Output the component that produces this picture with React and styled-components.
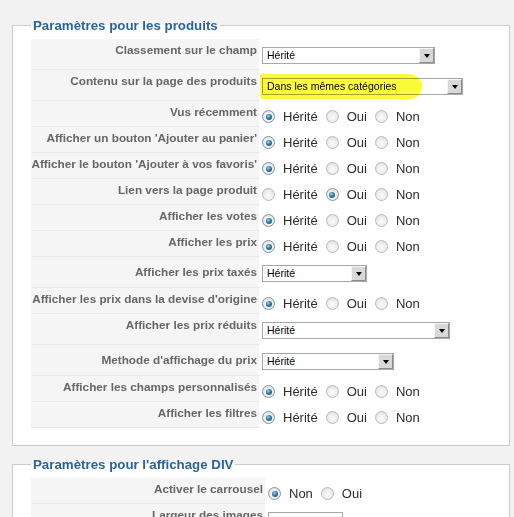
import React from 'react';
import styled, { createGlobalStyle } from 'styled-components';

const GlobalStyle = createGlobalStyle`
  html, body {
    margin: 0;
    padding: 0;
    background: #f2f2f2;
  }
  body {
    font-family: "Liberation Sans", Arial, sans-serif;
    overflow: hidden;
  }
`;

const Page = styled.div`
  padding: 18px 4px 0 12px;
`;

const Fieldset = styled.fieldset`
  margin: 0 0 11px;
  padding: 6px 18px 17px;
  border: 1px solid #cccccc;
  background: #ffffff;
  min-width: 0;
`;

const Legend = styled.legend`
  padding: 0 2px;
  font-size: 13.3px;
  line-height: 15px;
  font-weight: bold;
  color: #2a6496;
`;

const Table = styled.div`
  display: grid;
  grid-template-columns: ${p => p.$keyWidth}px 1fr;
`;

const Key = styled.div`
  display: flex;
  justify-content: flex-end;
  align-items: ${p => (p.$middle ? 'center' : 'flex-start')};
  padding: ${p => (p.$middle ? '0 2px 0 0' : '4px 2px 0 0')};
  background: #f5f5f5;
  border-bottom: 1px solid #e9e9e9;
  font-size: 11.75px;
  line-height: 14px;
  font-weight: bold;
  color: #666666;
  white-space: nowrap;
`;

const Value = styled.div`
  display: flex;
  align-items: center;
  padding: ${p => (p.$kind === 'radio' ? '8px 3px 3px' : '8px 3px 6px')};
  font-size: 13px;
  line-height: 15px;
  color: #2b2b2b;
`;

const Choice = styled.label`
  display: inline-flex;
  align-items: center;
  gap: 8px;
  margin-right: 8px;
  white-space: nowrap;
`;

const Radio = styled.span`
  position: relative;
  width: 13px;
  height: 13px;
  box-sizing: border-box;
  border-radius: 50%;
  border: 1px solid ${p => (p.$checked ? '#7b95aa' : '#b9b9b9')};
  background: radial-gradient(circle at 50% 60%, #fbfbfb 0, #ececec 55%, #d6d6d6 100%);
  flex-shrink: 0;

  &::after {
    content: '';
    display: ${p => (p.$checked ? 'block' : 'none')};
    position: absolute;
    inset: 2.5px;
    border-radius: 50%;
    background: radial-gradient(circle at 40% 35%, #9fd2ee 0, #2f7aa6 45%, #163f5f 100%);
  }
`;

const SelectWrap = styled.div`
  position: relative;
`;

const SelectBox = styled.div`
  display: flex;
  align-items: center;
  width: ${p => p.$width}px;
  height: 17px;
  box-sizing: border-box;
  padding-left: 4px;
  border: 1px solid #a7a7a7;
  background: #ffffff;
  font-size: 10.5px;
  color: #000000;
`;

const SelectArrow = styled.span`
  display: flex;
  align-items: center;
  justify-content: center;
  margin-left: auto;
  width: 15px;
  height: 15px;
  box-sizing: border-box;
  border: 1px solid;
  border-color: #f6f6f6 #8c8c8c #8c8c8c #f6f6f6;
  background: #d8d8d8;

  &::before {
    content: '';
    margin-top: 1px;
    border-left: 3px solid transparent;
    border-right: 3px solid transparent;
    border-top: 4px solid #000000;
  }
`;

/* highlighter stroke laid over the select */
const Marker = styled.span`
  position: absolute;
  left: -2px;
  top: -4px;
  width: 162px;
  height: 25px;
  background: #fbfb3a;
  border-radius: 2px 14px 12px 3px / 3px 12px 13px 4px;
  mix-blend-mode: multiply;
  filter: blur(0.4px);
  pointer-events: none;
`;

const TextInput = styled.div`
  width: 75px;
  height: 20px;
  box-sizing: border-box;
  border: 1px solid #a7a7a7;
  background: #ffffff;
`;

const Unit = styled.span`
  margin-left: 8px;
`;

const productRows = [
  { label: 'Classement sur le champ', type: 'select', value: 'Hérité', width: 173 },
  { label: 'Contenu sur la page des produits', type: 'select', value: 'Dans les mêmes catégories', width: 201, marked: true },
  { label: 'Vus récemment', type: 'radio', checked: 0 },
  { label: "Afficher un bouton 'Ajouter au panier'", type: 'radio', checked: 0 },
  { label: "Afficher le bouton 'Ajouter à vos favoris'", type: 'radio', checked: 0 },
  { label: 'Lien vers la page produit', type: 'radio', checked: 1 },
  { label: 'Afficher les votes', type: 'radio', checked: 0 },
  { label: 'Afficher les prix', type: 'radio', checked: 0 },
  { label: 'Afficher les prix taxés', type: 'select', value: 'Hérité', width: 105, middle: true },
  { label: "Afficher les prix dans la devise d'origine", type: 'radio', checked: 0 },
  { label: 'Afficher les prix réduits', type: 'select', value: 'Hérité', width: 188 },
  { label: "Methode d'affichage du prix", type: 'select', value: 'Hérité', width: 132, middle: true },
  { label: 'Afficher les champs personnalisés', type: 'radio', checked: 0 },
  { label: 'Afficher les filtres', type: 'radio', checked: 0 },
];

const divRows = [
  { label: 'Activer le carrousel', type: 'radio', options: ['Non', 'Oui'], checked: 0 },
  { label: 'Largeur des images', type: 'input', unit: 'px' },
];

function RadioGroup({ options = ['Hérité', 'Oui', 'Non'], checked }) {
  return options.map((opt, i) => (
    <Choice key={opt}>
      <Radio $checked={i === checked} />
      <span>{opt}</span>
    </Choice>
  ));
}

function Select({ value, width, marked }) {
  return (
    <SelectWrap>
      <SelectBox $width={width}>
        <span>{value}</span>
        <SelectArrow />
      </SelectBox>
      {marked && <Marker />}
    </SelectWrap>
  );
}

function Field({ row }) {
  if (row.type === 'select') return <Select value={row.value} width={row.width} marked={row.marked} />;
  if (row.type === 'input') {
    return (
      <>
        <TextInput />
        <Unit>{row.unit}</Unit>
      </>
    );
  }
  return <RadioGroup options={row.options} checked={row.checked} />;
}

function ParamTable({ rows, keyWidth }) {
  return (
    <Table $keyWidth={keyWidth}>
      {rows.map(row => (
        <React.Fragment key={row.label}>
          <Key $middle={row.middle}>{row.label}</Key>
          <Value $kind={row.type}>
            <Field row={row} />
          </Value>
        </React.Fragment>
      ))}
    </Table>
  );
}

export default function App() {
  return (
    <>
      <GlobalStyle />
      <Page>
        <Fieldset>
          <Legend>Paramètres pour les produits</Legend>
          <ParamTable rows={productRows} keyWidth={228} />
        </Fieldset>
        <Fieldset>
          <Legend>Paramètres pour l'affichage DIV</Legend>
          <ParamTable rows={divRows} keyWidth={234} />
        </Fieldset>
      </Page>
    </>
  );
}
